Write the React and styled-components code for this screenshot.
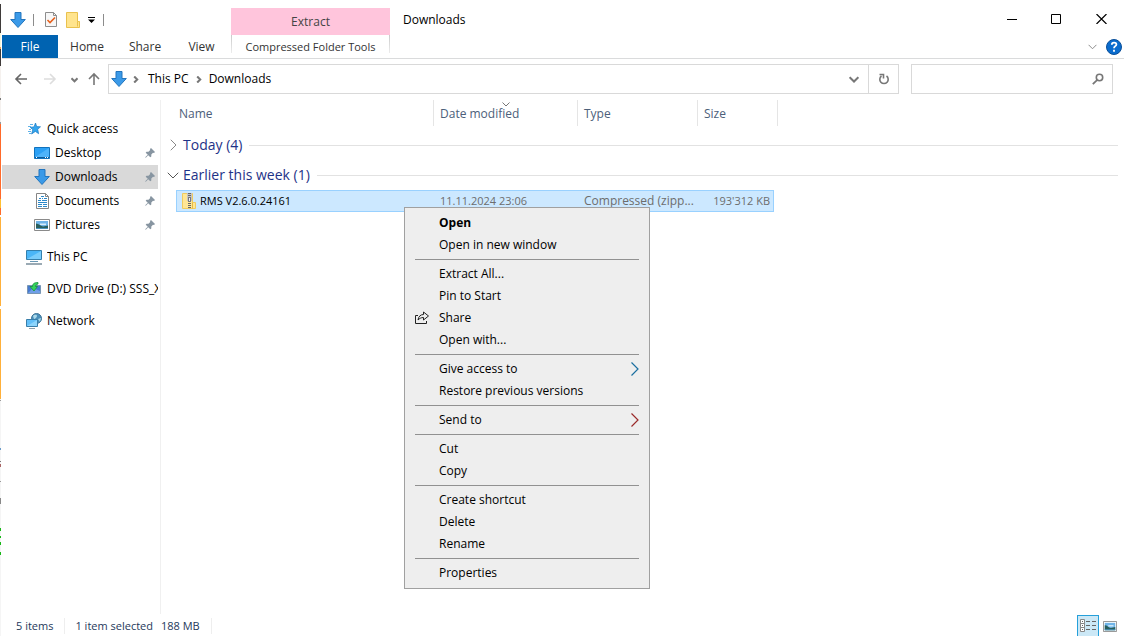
import styled, { createGlobalStyle, css } from "styled-components";

const GlobalStyle = createGlobalStyle`
  * {
    box-sizing: border-box;
  }
  body {
    margin: 0;
    background: white;
    color: black;
    font-family: "Open Sans", "Noto Sans", sans-serif;
    font-size: 12px;
    line-height: 16px;
  }
  button, input {
    font: inherit;
    color: inherit;
    border: 0;
    padding: 0;
    background: none;
  }
  svg {
    display: block;
    flex: none;
  }
`;

const Screen = styled.div`
  position: relative;
  display: flex;
  min-height: 100vh;
  overflow: hidden;
`;

/* the sliver of the desktop that shows beside the window */
const Desktop = styled.div`
  flex: none;
  width: 1px;
  margin-right: 1px;
  background: linear-gradient(
    #fff 4px, #3f3b3a 4px 33px, #f6f6d8 33px 47px, #f0a050 47px 49px,
    #3f3b3a 49px 66px, #f5f1ee 66px 98px, #777 98px 100px,
    #f5f1ee 100px 122px, #999 122px 124px,
    #ff6a2a 124px 199px, #ffc030 199px 208px, #ff6a2a 208px 215px,
    #fff 215px 217px, #ffb03a 217px 306px, #fff 306px 309px,
    #ffb03a 309px 399px, #f5f5f5 399px 400px, #999 400px 401px,
    #f5f5f5 401px 448px, #6a9ac8 448px 450px,
    #f5f5f5 450px 461px, #777 461px 462px, #f5f5f5 462px 464px,
    #a66 464px 467px, #f5f5f5 467px 481px, #999 481px 482px,
    #f5f5f5 482px 498px, #888 498px 504px,
    #f5f5f5 504px 528px, #18b818 528px 531px, #f5f5f5 531px 536px,
    #18b818 536px 538px, #f5f5f5 538px 542px, #18b818 542px 545px,
    #f5f5f5 545px 552px, #18b818 552px 555px, #f5f5f5 555px
  );
`;

const Window = styled.div`
  flex: 1;
  min-width: 0;
  display: flex;
  flex-direction: column;
`;

const Ribbon = styled.header`
  display: flex;
  height: 59px;
  border-bottom: 1px solid #dadbdc;
`;

const RibbonLeft = styled.div`
  width: 229px;
`;

const QuickBar = styled.div`
  display: flex;
  align-items: center;
  height: 35px;
  padding: 4px 0 0 8px;
`;

const QuickButton = styled.button`
  display: flex;
  justify-content: center;
  width: ${(p) => p.$width}px;
`;

const QuickLine = styled.span`
  width: 1px;
  height: 12px;
  margin: 0 ${(p) => p.$gap}px;
  background: #8c8c8c;
`;

const Tabs = styled.nav`
  display: flex;
  height: 23px;
`;

const Tab = styled.button`
  width: ${(p) => p.$width}px;
  color: ${(p) => (p.$file ? "white" : "#333")};
  background: ${(p) => (p.$file ? "#0063b1" : "none")};
`;

const ToolTab = styled.div`
  width: 159px;
  padding-top: 8px;
`;

const ToolTitle = styled.div`
  height: 27px;
  line-height: 28px;
  text-align: center;
  color: #444;
  background: #ffc5dc;
`;

const ToolButton = styled.button`
  display: block;
  width: 100%;
  height: 18px;
  padding-top: 5px;
  font-size: 11px;
  line-height: 14px;
  color: #333;
  white-space: nowrap;
  border: solid transparent;
  border-width: 0 1px;
  border-image: linear-gradient(#c8c8c8, #eee) 1;
  border-image-width: 0 1px;
`;

const Caption = styled.h1`
  flex: 1;
  margin: 12px 0 0 13px;
  font-size: 12px;
  font-weight: 400;
  line-height: 16px;
`;

const RibbonRight = styled.div`
  display: flex;
  flex-direction: column;
`;

const WindowButtons = styled.div`
  display: flex;
  height: 35px;
  padding-top: 3px;
`;

const WindowButton = styled.button`
  display: grid;
  place-items: center;
  width: 45px;
`;

const HelpButtons = styled.div`
  display: flex;
  align-items: center;
  justify-content: flex-end;
  gap: 9px;
  height: 23px;
  padding-right: 2px;
`;

const NavBar = styled.div`
  display: flex;
  align-items: center;
  height: 41px;
  padding: 0 11px 1px 9px;
`;

const NavButton = styled.button`
  display: grid;
  place-items: center;
  width: ${(p) => p.$width}px;
  height: 24px;
`;

const Address = styled.div`
  flex: 1;
  display: flex;
  align-items: center;
  height: 30px;
  margin-right: 12px;
  padding-left: 2px;
  border: 1px solid #d9d9d9;
`;

const Crumb = styled.button`
  height: 28px;
  padding: 0 5px;
`;

const CrumbArrow = styled.span`
  display: grid;
  place-items: center;
  width: ${(p) => p.$width}px;
`;

const Spacer = styled.span`
  flex: 1;
`;

const Refresh = styled.button`
  display: grid;
  place-items: center;
  width: 30px;
  height: 28px;
  border-left: 1px solid #d9d9d9;
`;

const Search = styled.label`
  display: flex;
  align-items: center;
  width: 202px;
  height: 30px;
  padding-right: 8px;
  border: 1px solid #d9d9d9;
`;

const SearchInput = styled.input`
  flex: 1;
  min-width: 0;
  height: 28px;
  padding: 0 6px;
  outline: none;
`;

const Body = styled.div`
  flex: 1;
  display: flex;
  min-height: 0;
`;

const Tree = styled.nav`
  flex: none;
  width: 159px;
  padding: 17px 2px 0 0;
  border-right: 1px solid #f0f0f0;
`;

const TreeItem = styled.a`
  display: flex;
  align-items: center;
  gap: 5px;
  height: 24px;
  margin-bottom: ${(p) => (p.$gap ? 8 : 0)}px;
  padding-left: ${(p) => (p.$nested ? 32 : 24)}px;
  padding-right: ${(p) => (p.$nested ? 3 : 0)}px;
  color: black;
  text-decoration: none;
  background: ${(p) => (p.$active ? "#d9d9d9" : "none")};
`;

const TreeIcon = styled.span`
  display: grid;
  place-items: center;
  flex: none;
  width: 16px;
`;

const TreeLabel = styled.span`
  flex: 1;
  overflow: hidden;
  white-space: nowrap;
`;

const Files = styled.main`
  flex: 1;
  min-width: 0;
  padding-right: 6px;
`;

const FileTable = styled.table`
  width: 100%;
  table-layout: fixed;
  border-spacing: 0;
`;

const Col = styled.col`
  width: ${(p) => (p.$width ? `${p.$width}px` : "auto")};
`;

const HeadCell = styled.th`
  position: relative;
  height: 26px;
  padding: 2px 0 0 ${(p) => p.$left || 0}px;
  color: #4c607a;
  font-weight: 400;
  text-align: left;
  ${(p) => p.$line && "border-right: 1px solid #e5e5e5;"}
`;

const SortMark = styled.span`
  position: absolute;
  top: 0;
  left: 50%;
  margin-left: -4px;
`;

const GroupCell = styled.td`
  padding: ${(p) => (p.$first ? 4 : 0)}px 0 0;
`;

const Group = styled.button`
  display: flex;
  align-items: center;
  width: 100%;
  height: 30px;
  padding-left: 6px;
  color: #1e3287;
  font-size: 14px;
  line-height: 20px;
  white-space: nowrap;

  &::after {
    content: "";
    flex: 1;
    height: 1px;
    margin-left: 7px;
    background: #e2e2e2;
  }
`;

const GroupArrow = styled.span`
  display: grid;
  place-items: center;
  width: 12px;
  margin-right: 4px;
`;

const Cell = styled.td`
  height: 22px;
  padding: 0 3px 0 6px;
  overflow: hidden;
  color: #6d6d6d;
  font-size: ${(p) => (p.$wide ? 12 : 11)}px;
  white-space: nowrap;
  text-align: ${(p) => (p.$right ? "right" : "left")};
  background: #cce8ff;
  border: solid #99d1ff;
  border-width: 1px ${(p) => (p.$right ? "1px" : "0")} 1px 0;
  ${(p) =>
    p.$name &&
    css`
      padding-left: 5px;
      color: black;
      border-left-width: 1px;
    `}
`;

const FileName = styled.span`
  display: flex;
  align-items: center;
  gap: 4px;
`;

const StatusBar = styled.footer`
  display: flex;
  align-items: center;
  height: 22px;
  padding: 2px 3px 0 14px;
  color: #1e395b;
  font-size: 11px;
`;

const Status = styled.span`
  padding-right: ${(p) => p.$end}px;
  margin-right: ${(p) => (p.$line ? 10 : 0)}px;
  border-right: ${(p) => (p.$line ? "1px solid #eee" : "0")};
`;

const ViewButton = styled.button`
  display: grid;
  place-items: center;
  width: 22px;
  height: 22px;
  background: ${(p) => (p.$active ? "#cce8f6" : "none")};
  border: ${(p) => (p.$active ? "1px solid #26a0da" : "0")};
`;

const Menu = styled.div`
  position: absolute;
  top: 207px;
  left: 404px;
  width: 246px;
  padding: 4px 0;
  background: #eee;
  border: 1px solid #a0a0a0;
`;

const MenuItem = styled.button`
  display: flex;
  align-items: center;
  width: 100%;
  height: 22px;
  padding: 0 10px 0 9px;
  font-weight: ${(p) => (p.$bold ? 700 : 400)};
  text-align: left;
`;

const MenuIcon = styled.span`
  width: 25px;
`;

const MenuLabel = styled.span`
  flex: 1;
`;

const Separator = styled.hr`
  height: 1px;
  margin: 3px 10px;
  border: 0;
  background: #919191;
`;

function DownArrow() {
  return (
    <svg width="16" height="16" viewBox="0 0 16 16">
      <path d="M5 .5h6v7h4.3L8 15.5.7 7.5H5z" fill="#3b9ae8" stroke="#2375bd" />
    </svg>
  );
}

function Chevron({ dir = "down", size = 8, color = "#777", weight = 1 }) {
  const paths = {
    down: "M0.5 2.5 4 6l3.5-3.5",
    right: "M2.5 .5 6 4 2.5 7.5",
  };
  return (
    <svg width={size} height={size} viewBox="0 0 8 8">
      <path d={paths[dir]} fill="none" stroke={color} strokeWidth={(weight * 8) / size} />
    </svg>
  );
}

function NavArrow({ dir, color }) {
  const turn = { left: 0, up: 90, right: 180 }[dir];
  return (
    <svg width="14" height="14" viewBox="0 0 14 14">
      <path
        d="M13 7H2M7 2 2 7l5 5"
        transform={`rotate(${turn} 7 7)`}
        fill="none"
        stroke={color}
        strokeWidth="1.6"
      />
    </svg>
  );
}

function PropertiesIcon() {
  return (
    <svg width="14" height="17" viewBox="0 0 14 17">
      <path d="M1.5 1.5h8l3 3v11h-11z" fill="#f7f7f7" stroke="#8d8d8d" />
      <path d="M9.5 1.5v3h3" fill="none" stroke="#8d8d8d" />
      <path d="m3.5 9 2.500 2.500 5-5" fill="none" stroke="#e8601c" strokeWidth="1.600" />
    </svg>
  );
}

function FolderIcon() {
  return (
    <svg width="14" height="16" viewBox="0 0 14 16">
      <path d="M.5.5h11v9h2v6H.5z" fill="#ffe48d" stroke="#e9c14d" />
      <path d="M11.5 9.5v5" stroke="#e9c14d" />
    </svg>
  );
}

function ZipIcon() {
  return (
    <svg width="14" height="16" viewBox="0 0 14 16">
      <path d="M.5.5h10v9h3v6H.5z" fill="#ffe694" stroke="#f0cb5e" />
      <path d="M10.500 9.500v6" stroke="#e4b945" />
      <path d="M5 0h5v8H5z" fill="#c4c4c4" />
      <path d="M7.500 0v16" stroke="#666" strokeWidth="3" strokeDasharray="1 1" />
      <path d="M6.500 4.500h2v4h-2z" fill="#eee" stroke="#777" />
    </svg>
  );
}

function PinIcon() {
  return (
    <svg width="10" height="10" viewBox="0 0 10 10">
      <path
        d="M6 0 10 4 9 5 8 4.800 6.300 6.500 6.300 8.500 5.300 9.300 3.200 7.200 .8 9.800 .2 9.200 2.800 6.800 .7 4.700 1.500 3.700 3.500 3.700 5.200 2 5 1z"
        fill="#8795a1"
      />
    </svg>
  );
}

function StarIcon() {
  return (
    <svg width="14" height="14" viewBox="0 0 14 14">
      <path
        d="m8.500 1 1.200 3.600 3.800.2-2.800 2.500.9 4.400-3.200-2.300-3.800 2.600 1.200-4.300-2.600-2.400 3.800-.4z"
        fill="#33a5ee"
        stroke="#1a78c2"
        strokeWidth=".7"
      />
      <path d="M3 2.500h3M1 4.500h3M2 7.500h2M1 9.500h3M2 11.500h2" stroke="#5fb2e8" />
    </svg>
  );
}

function DesktopIcon() {
  return (
    <svg width="16" height="12" viewBox="0 0 16 12">
      <path d="M.5.5h15v11H.5z" fill="#2ba0f5" stroke="#1172bd" />
      <path d="M1 10 15 1v9z" fill="#4db3fb" />
      <path d="M1 10.500h14" stroke="#0b5a9b" />
      <path d="M2 10.500h1M11 10.500h1M13 10.500h1" stroke="white" />
    </svg>
  );
}

function DocumentIcon() {
  return (
    <svg width="13" height="16" viewBox="0 0 13 16">
      <path d="M.5.5h9l3 3v12H.5z" fill="white" stroke="#858585" />
      <path d="M9.500 .5v3h3" fill="none" stroke="#858585" />
      <path d="M5 3.500h3M3 5.500h2M6 5.500h1M8 5.500h3M2 7.500h3M6 7.500h5M2 9.500h9M2 11.500h4M7 11.500h4M2 13.500h4M7 13.500h4" stroke="#2b88c9" />
    </svg>
  );
}

function PictureIcon({ small }) {
  return (
    <svg width={small ? 14 : 16} height={small ? 11 : 12} viewBox="0 0 16 12" preserveAspectRatio="none">
      <path d="M.5.5h15v11H.5z" fill="white" stroke="#8a8a8a" />
      <path d="M2 2h12v8H2z" fill="#6fb4e8" />
      <path d="M6 4.500h6v1.500H6z" fill="#d6ecfa" />
      <path d="M2 4.500c3 0 4 2.500 7 3l5-1V10H2z" fill="#295f5c" />
      <path d="M2 9h12v1H2z" fill="#4b92bd" />
    </svg>
  );
}

function PcIcon() {
  return (
    <svg width="16" height="15" viewBox="0 0 16 15">
      <path d="M.5.5h15v9H.5z" fill="#4ab6f8" stroke="#3580ad" />
      <path d="M1 9 15 1v8z" fill="#79cdfc" />
      <path d="M4 11.500h8" stroke="#6a98b5" />
      <path d="M0 14h16" stroke="#9aaab4" strokeWidth="2" />
    </svg>
  );
}

function DvdIcon() {
  return (
    <svg width="14" height="14" viewBox="0 0 14 14">
      <path d="M.5 3.500h13v8H.5z" fill="#4779d0" stroke="#7896b5" />
      <path d="m1 11 5-5 7 3v2z" fill="#6f9fe8" />
      <path d="M11 .5C7 .5 5.500 2 5.500 4.500H3l4 4.500 3.500-4.500h-2c0-1.500 1-2 2.500-2.500z" fill="#35d45b" stroke="#168f3b" strokeWidth=".8" />
    </svg>
  );
}

function NetworkIcon() {
  return (
    <svg width="16" height="16" viewBox="0 0 16 16">
      <circle cx="10.500" cy="5.500" r="5" fill="#4a8fba" stroke="#3d7396" />
      <path d="M7 3c2-2 4-1 4 0S9 6 8 6zM12 6l3-1-1 4z" fill="#abd9ea" />
      <path d="M.5 6.500h11v7H.5z" fill="#63c0f9" stroke="#397ea9" />
      <path d="m1 13 10-6v6z" fill="#8dd5fc" />
      <path d="M3 15.500h6" stroke="#8ea0ab" />
    </svg>
  );
}

function ShareIcon() {
  return (
    <svg width="16" height="14" viewBox="0 0 16 14">
      <path
        d="M4 4.500H1.500v8h11V10M9.500 1v2.500C6.500 3.500 4.500 5.500 4 9c1.500-1.500 3-2.500 5.500-2.500V9l5-4z"
        fill="none"
        stroke="#222"
      />
    </svg>
  );
}

function SubArrow({ color }) {
  return (
    <svg width="8" height="14" viewBox="0 0 8 14">
      <path d="m.5.5 6.500 6.500-6.500 6.500" fill="none" stroke={color} strokeWidth="1.200" />
    </svg>
  );
}

const places = [
  { label: "Quick access", icon: <StarIcon /> },
  { label: "Desktop", icon: <DesktopIcon />, nested: true },
  { label: "Downloads", icon: <DownArrow />, nested: true, active: true },
  { label: "Documents", icon: <DocumentIcon />, nested: true },
  { label: "Pictures", icon: <PictureIcon />, nested: true, gap: true },
  { label: "This PC", icon: <PcIcon />, gap: true },
  { label: "DVD Drive (D:) SSS_X6", icon: <DvdIcon />, gap: true },
  { label: "Network", icon: <NetworkIcon /> },
];

const menuGroups = [
  [{ label: "Open", bold: true }, { label: "Open in new window" }],
  [
    { label: "Extract All..." },
    { label: "Pin to Start" },
    { label: "Share", icon: <ShareIcon /> },
    { label: "Open with..." },
  ],
  [{ label: "Give access to", arrow: "#1b6fa0" }, { label: "Restore previous versions" }],
  [{ label: "Send to", arrow: "#9a2a2a" }],
  [{ label: "Cut" }, { label: "Copy" }],
  [{ label: "Create shortcut" }, { label: "Delete" }, { label: "Rename" }],
  [{ label: "Properties" }],
];

function TopRibbon() {
  return (
    <Ribbon>
      <RibbonLeft>
        <QuickBar>
          <DownArrow />
          <QuickLine $gap={7} />
          <QuickButton aria-label="Properties" $width={20}>
            <PropertiesIcon />
          </QuickButton>
          <QuickButton aria-label="New folder" $width={24}>
            <FolderIcon />
          </QuickButton>
          <QuickButton aria-label="Customize toolbar" $width={13}>
            <svg width="7" height="6" viewBox="0 0 7 6">
              <path d="M0 0h7v1H0zM0 2.500h7L3.500 6z" />
            </svg>
          </QuickButton>
          <QuickLine $gap={5} />
        </QuickBar>
        <Tabs>
          <Tab $file $width={56}>File</Tab>
          <Tab $width={58}>Home</Tab>
          <Tab $width={58}>Share</Tab>
          <Tab $width={55}>View</Tab>
        </Tabs>
      </RibbonLeft>
      <ToolTab>
        <ToolTitle>Extract</ToolTitle>
        <ToolButton>Compressed Folder Tools</ToolButton>
      </ToolTab>
      <Caption>Downloads</Caption>
      <RibbonRight>
        <WindowButtons>
          <WindowButton aria-label="Minimize">
            <svg width="10" height="11" viewBox="0 0 10 11">
              <path d="M0 5.500h10" stroke="black" />
            </svg>
          </WindowButton>
          <WindowButton aria-label="Maximize">
            <svg width="11" height="10" viewBox="0 0 11 10">
              <path d="M.5.5h9v9h-9z" fill="none" stroke="black" />
            </svg>
          </WindowButton>
          <WindowButton aria-label="Close">
            <svg width="11" height="10" viewBox="0 0 11 10">
              <path d="m.5 0 10 10M10.500 0 .5 10" stroke="black" strokeWidth="1.200" />
            </svg>
          </WindowButton>
        </WindowButtons>
        <HelpButtons>
          <button aria-label="Expand the ribbon">
            <Chevron size={9} color="#8c8c8c" />
          </button>
          <button aria-label="Help">
            <svg width="16" height="16" viewBox="0 0 16 16">
              <circle cx="8" cy="8" r="7.500" fill="#0a6cce" stroke="#0a4f99" />
              <path
                d="M5.800 5.800c0-3 4.600-2.800 4.600-.3 0 1.600-2.400 1.800-2.400 3.700M8 10.700v2"
                fill="none"
                stroke="white"
                strokeWidth="1.800"
              />
            </svg>
          </button>
        </HelpButtons>
      </RibbonRight>
    </Ribbon>
  );
}

function Navigation() {
  return (
    <NavBar>
      <NavButton aria-label="Back" $width={20}><NavArrow dir="left" color="#666" /></NavButton>
      <NavButton aria-label="Forward" $width={38}><NavArrow dir="right" color="#ddd" /></NavButton>
      <NavButton aria-label="Recent locations" $width={10}><Chevron size={7} weight={2} /></NavButton>
      <NavButton aria-label="Up" $width={29}><NavArrow dir="up" color="#777" /></NavButton>
      <Address>
        <DownArrow />
        <CrumbArrow $width={16}><Chevron dir="right" size={7} weight={2} /></CrumbArrow>
        <Crumb>This PC</Crumb>
        <CrumbArrow $width={10}><Chevron dir="right" size={7} weight={2} /></CrumbArrow>
        <Crumb>Downloads</Crumb>
        <Spacer />
        <NavButton aria-label="Previous locations" $width={28}><Chevron size={10} weight={2} /></NavButton>
        <Refresh aria-label="Refresh">
          <svg width="12" height="12" viewBox="0 0 12 12">
            <path d="M8.500 3a4.200 4.200 0 1 1-5 0M1.500 1.500h4v4" fill="none" stroke="#777" strokeWidth="1.600" />
          </svg>
        </Refresh>
      </Address>
      <Search>
        <SearchInput type="text" aria-label="Search Downloads" />
        <svg width="12" height="12" viewBox="0 0 12 12">
          <circle cx="7.500" cy="4.500" r="3.200" fill="none" stroke="#777" strokeWidth="1.600" />
          <path d="M5.300 6.800.8 11.200" stroke="#777" strokeWidth="1.800" />
        </svg>
      </Search>
    </NavBar>
  );
}

function FileList() {
  return (
    <Files>
      <FileTable>
        <colgroup>
          <Col $width={15} />
          <Col $width={258} />
          <Col $width={144} />
          <Col $width={120} />
          <Col $width={76} />
          <Col $width={4} />
          <Col />
        </colgroup>
        <thead>
          <tr>
            <HeadCell />
            <HeadCell $left={3} $line>Name</HeadCell>
            <HeadCell $left={6} $line aria-sort="descending">
              Date modified
              <SortMark><Chevron color="#777" /></SortMark>
            </HeadCell>
            <HeadCell $left={6} $line>Type</HeadCell>
            <HeadCell $left={6} $line colSpan={2}>Size</HeadCell>
            <HeadCell />
          </tr>
        </thead>
        <tbody>
          <tr>
            <GroupCell $first colSpan={7}>
              <Group>
                <GroupArrow><Chevron dir="right" size={12} color="#888" /></GroupArrow>
                Today (4)
              </Group>
            </GroupCell>
          </tr>
          <tr>
            <GroupCell colSpan={7}>
              <Group>
                <GroupArrow><Chevron size={12} color="#555" /></GroupArrow>
                Earlier this week (1)
              </Group>
            </GroupCell>
          </tr>
          <tr>
            <td />
            <Cell $name>
              <FileName>
                <ZipIcon />
                RMS V2.6.0.24161
              </FileName>
            </Cell>
            <Cell>11.11.2024 23:06</Cell>
            <Cell $wide>Compressed (zipp...</Cell>
            <Cell $right>193'312 KB</Cell>
            <td />
            <td />
          </tr>
        </tbody>
      </FileTable>
    </Files>
  );
}

function ContextMenu() {
  return (
    <Menu role="menu">
      {menuGroups.map((group, i) => (
        <div key={i}>
          {i > 0 && <Separator />}
          {group.map((item) => (
            <MenuItem key={item.label} role="menuitem" $bold={item.bold}>
              <MenuIcon>{item.icon}</MenuIcon>
              <MenuLabel>{item.label}</MenuLabel>
              {item.arrow && <SubArrow color={item.arrow} />}
            </MenuItem>
          ))}
        </div>
      ))}
    </Menu>
  );
}

function App() {
  return (
    <Screen>
      <GlobalStyle />
      <Desktop />
      <Window>
        <TopRibbon />
        <Navigation />
        <Body>
          <Tree>
            {places.map((place) => (
              <TreeItem
                key={place.label}
                href="#"
                $nested={place.nested}
                $active={place.active}
                $gap={place.gap}>
                <TreeIcon>{place.icon}</TreeIcon>
                <TreeLabel>{place.label}</TreeLabel>
                {place.nested && <PinIcon />}
              </TreeItem>
            ))}
          </Tree>
          <FileList />
        </Body>
        <StatusBar>
          <Status $end={11} $line>5 items</Status>
          <Status $end={8}>1 item selected</Status>
          <Status $end={11} $line>188 MB</Status>
          <Spacer />
          <ViewButton aria-label="Details view" $active>
            <svg width="16" height="14" viewBox="0 0 16 14">
              <path d="M.5.5h4v4h-4zM.5 4.500h4v4h-4zM.5 8.500h4v4h-4z" fill="white" stroke="#888" />
              <path d="M2 2.500h1M2 6.500h1M2 10.500h1M6 2.500h4M12 2.500h4M6 6.500h4M12 6.500h4M6 10.500h4M12 10.500h4" stroke="#666" />
            </svg>
          </ViewButton>
          <ViewButton aria-label="Large icons view"><PictureIcon small /></ViewButton>
        </StatusBar>
      </Window>
      <ContextMenu />
    </Screen>
  );
}

export default App;
